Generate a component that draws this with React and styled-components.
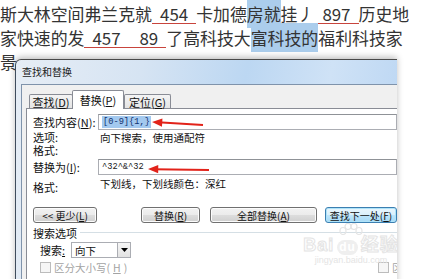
import styled, { createGlobalStyle } from "styled-components";

const GlobalStyle = createGlobalStyle`
  html, body {
    margin: 0;
    padding: 0;
    background: #ffffff;
  }
  body {
    width: 421px;
    height: 279px;
    overflow: hidden;
  }
`;

const CJK = `"Noto Sans CJK SC", "Noto Sans", sans-serif`;

function Arrow({ x1, y1, x2, y2 }) {
  const ang = Math.atan2(y1 - y2, x1 - x2);
  const len = 11;
  const spread = 0.38;
  const ax = x2 + len * Math.cos(ang - spread);
  const ay = y2 + len * Math.sin(ang - spread);
  const bx = x2 + len * Math.cos(ang + spread);
  const by = y2 + len * Math.sin(ang + spread);
  return (
    <ArrowSvg width="140" height="20" viewBox="0 0 140 20">
      <line x1={x1} y1={y1} x2={x2 + 6} y2={y2 + 0.3} stroke="#e2231a" strokeWidth="2" />
      <polygon points={`${x2},${y2} ${ax},${ay} ${bx},${by}`} fill="#e2231a" />
    </ArrowSvg>
  );
}

export default function App() {
  return (
    <>
      <GlobalStyle />
      <Page>
        <Doc>
          <Line>
            斯大林空间弗兰克就<Blank>454</Blank>卡加德<Mark>房就</Mark>挂丿<Blank>897</Blank>历史地
          </Line>
          <Line>
            家快速的发<Blank>457&nbsp;&nbsp;&nbsp;&nbsp;&nbsp;89</Blank>了高科技大<Mark>富科技的</Mark>福利科技家
          </Line>
          <Line>景</Line>
        </Doc>

        <Dialog>
          <TitleBar>查找和替换</TitleBar>
          <Client>
            <Tabs>
              <Tab $w={44}>查找(<u>D</u>)</Tab>
              <Tab $w={52} $active>替换(<u>P</u>)</Tab>
              <Tab $w={47}>定位(<u>G</u>)</Tab>
            </Tabs>
            <Panel>
              <Row>
                <Label>查找内容(<u>N</u>):</Label>
                <Field>
                  <Selected>[0-9]&#123;1,&#125;</Selected>
                  <Arrow x1={104} y1={10} x2={53} y2={7} />
                </Field>
              </Row>
              <Row $h={13} $mt={1}>
                <Label>选项:</Label>
                <Value>向下搜索，使用通配符</Value>
              </Row>
              <Row $h={13}>
                <Label>格式:</Label>
              </Row>
              <Row $mt={2}>
                <Label>替换为(<u>I</u>):</Label>
                <Field>
                  ^32^&amp;^32
                  <Arrow x1={110} y1={10} x2={49} y2={9} />
                </Field>
              </Row>
              <Row $h={18} $mt={1}>
                <Label $end>格式:</Label>
                <Value $top>下划线，下划线颜色：深红</Value>
              </Row>
              <Buttons>
                <Button $w={64}>&lt;&lt; 更少(<u>L</u>)</Button>
                <Button $w={59} $ml={44}>替换(<u>R</u>)</Button>
                <Button $w={107} $ml={10}>全部替换(<u>A</u>)</Button>
                <Button $w={72} $ml={8} $default>查找下一处(<u>F</u>)</Button>
              </Buttons>
              <Group>
                <span>搜索选项</span>
                <Rule />
              </Group>
              <SearchRow>
                <span>搜索<u>:</u></span>
                <Select>
                  <span>向下</span>
                  <Drop>
                    <svg width="7" height="4" viewBox="0 0 7 4">
                      <polygon points="0,0 7,0 3.5,4" fill="#000" />
                    </svg>
                  </Drop>
                </Select>
              </SearchRow>
              <Checks>
                <Check>
                  <Box />
                  区分大小写(<u>H</u>)
                </Check>
                <Check>
                  <Box />
                  区分前缀(<u>X</u>)
                </Check>
              </Checks>
            </Panel>
          </Client>
          <Watermark>
            <Paw>
              <svg width="26" height="16" viewBox="0 0 26 16">
                <g fill="none" stroke="#e4e4e4" strokeWidth="1.2">
                  <ellipse cx="5" cy="8" rx="3" ry="3.5" />
                  <ellipse cx="10" cy="3.5" rx="3" ry="3" />
                  <ellipse cx="16" cy="3.5" rx="3" ry="3" />
                  <ellipse cx="21" cy="8" rx="3" ry="3.5" />
                </g>
              </svg>
            </Paw>
            <WmBig>
              Bai<WmDu>du</WmDu>经验
            </WmBig>
            <WmSmall>jingyan.baidu.com</WmSmall>
          </Watermark>
        </Dialog>
      </Page>
    </>
  );
}

const Page = styled.div`
  position: relative;
  width: 421px;
  height: 279px;
  overflow: hidden;
  background: #fff;
`;

const Doc = styled.div`
  padding-top: 2px;
  font-family: ${CJK};
  font-size: 16.9px;
  line-height: 24px;
  color: #333;
  white-space: nowrap;
`;

const Line = styled.div`
  height: 24px;
`;

const Blank = styled.span`
  display: inline-block;
  line-height: 18px;
  padding: 0 8px;
  border-bottom: 1px solid #c8443c;
  white-space: pre;
`;

const Mark = styled.span`
  background: #abcdec;
  padding: 2px 0;
`;

const Dialog = styled.div`
  position: absolute;
  left: 15px;
  top: 59px;
  width: 382px;
  height: 240px;
  overflow: hidden;
  box-sizing: border-box;
  border-left: 1px solid #3f4c5c;
  border-top: 1px solid #4a4a4a;
  border-top-left-radius: 6px;
  padding-left: 5px;
  background: linear-gradient(100deg, #e6edf5 0%, #d6e4f3 30%, #bcd7f2 55%, #cfe2f6 75%, #b6d3f2 100%);
  box-shadow: 0 -2px 6px rgba(0, 0, 0, 0.25);
`;

const TitleBar = styled.div`
  height: 24px;
  line-height: 24px;
  padding-left: 1px;
  font-family: ${CJK};
  font-size: 10px;
  color: #1a1a1a;
`;

const Client = styled.div`
  height: 100%;
  box-sizing: border-box;
  border-top: 1px solid #7f93ab;
  border-left: 1px solid #7f93ab;
  background: #f0f0f0;
  padding: 5px 0 0 4px;
  font-family: ${CJK};
  font-size: 10.5px;
  color: #111;
`;

const Tabs = styled.div`
  display: flex;
  align-items: flex-end;
  margin-left: 3px;
  position: relative;
  z-index: 1;
`;

const Tab = styled.div`
  width: ${(p) => p.$w}px;
  height: ${(p) => (p.$active ? 19 : 14)}px;
  margin-bottom: ${(p) => (p.$active ? -1 : 0)}px;
  margin-left: ${(p) => (p.$active ? -1 : 0)}px;
  box-sizing: border-box;
  border: 1px solid #898c95;
  border-bottom: none;
  border-radius: 2px 2px 0 0;
  background: ${(p) => (p.$active ? "#ffffff" : "linear-gradient(#f4f4f4, #e4e4e4)")};
  display: flex;
  align-items: center;
  justify-content: center;
  font-size: 11px;
  u {
    text-underline-offset: 1px;
  }
`;

const Panel = styled.div`
  height: 100%;
  box-sizing: border-box;
  border-top: 1px solid #898c95;
  border-left: 1px solid #898c95;
  background: #ffffff;
  padding: 5px 0 0 6px;
`;

const Row = styled.div`
  display: flex;
  height: ${(p) => p.$h || 16}px;
  margin-top: ${(p) => p.$mt || 0}px;
`;

const Label = styled.div`
  width: 65px;
  flex: none;
  font-size: 11px;
  line-height: 13px;
  align-self: ${(p) => (p.$end ? "flex-end" : "center")};
`;

const Value = styled.div`
  padding-left: 2px;
  line-height: 13px;
  align-self: ${(p) => (p.$top ? "flex-start" : "center")};
  margin-top: ${(p) => (p.$top ? 1 : 0)}px;
  white-space: nowrap;
`;

const Field = styled.div`
  position: relative;
  flex: 1;
  box-sizing: border-box;
  height: 16px;
  border: 1px solid #abadb3;
  border-top-color: #8f9297;
  padding-left: 3px;
  display: flex;
  align-items: center;
  font-family: "Liberation Mono", monospace;
  font-size: 8.7px;
  color: #1a1a1a;
  white-space: pre;
`;

const Selected = styled.span`
  background: #a3c9ef;
  color: #10306e;
  padding: 1px 1px;
`;

const ArrowSvg = styled.svg`
  position: absolute;
  left: 0;
  top: 0;
  overflow: visible;
`;

const Buttons = styled.div`
  display: flex;
  margin-top: 13px;
`;

const Button = styled.div`
  flex: none;
  width: ${(p) => p.$w}px;
  height: 16px;
  margin-left: ${(p) => p.$ml || 0}px;
  box-sizing: border-box;
  border: 1px solid ${(p) => (p.$default ? "#3c7fb1" : "#707070")};
  border-radius: 3px;
  background: ${(p) =>
    p.$default
      ? "linear-gradient(#eaf6fd, #d9f0fc 50%, #bee6fd 51%, #a7d9f5)"
      : "linear-gradient(#f2f2f2, #ebebeb 50%, #dddddd 51%, #cfcfcf)"};
  box-shadow: inset 0 0 0 1px ${(p) => (p.$default ? "#aee3f9" : "#fcfcfc")};
  display: flex;
  align-items: center;
  justify-content: center;
  font-size: 10px;
  white-space: nowrap;
`;

const Group = styled.div`
  display: flex;
  align-items: center;
  gap: 3px;
  height: 13px;
  margin-top: 3px;
  font-size: 11px;
`;

const Rule = styled.div`
  flex: 1;
  height: 1px;
  background: #d5dfe5;
`;

const SearchRow = styled.div`
  display: flex;
  align-items: center;
  gap: 6px;
  height: 16px;
  margin-top: 3px;
  padding-left: 7px;
  font-size: 11px;
`;

const Select = styled.div`
  width: 60px;
  height: 16px;
  box-sizing: border-box;
  border: 1px solid #abadb3;
  display: flex;
  align-items: center;
  justify-content: space-between;
  padding-left: 3px;
  font-size: 10.5px;
`;

const Drop = styled.div`
  width: 13px;
  height: 14px;
  box-sizing: border-box;
  border-left: 1px solid #abadb3;
  background: linear-gradient(#f6f6f6, #e2e2e2);
  display: flex;
  align-items: center;
  justify-content: center;
`;

const Checks = styled.div`
  display: grid;
  grid-template-columns: 338px auto;
  height: 14px;
  margin-top: 2px;
  padding-left: 7px;
`;

const Check = styled.div`
  display: flex;
  align-items: center;
  gap: 3px;
  color: #a3a3a3;
  font-size: 10.5px;
  white-space: nowrap;
`;

const Box = styled.span`
  width: 9px;
  height: 9px;
  border: 1px solid #bcbcbc;
  background: #f6f6f6;
`;

const Watermark = styled.div`
  position: absolute;
  left: 287px;
  top: 163px;
  width: 96px;
  display: flex;
  flex-direction: column;
  align-items: center;
  pointer-events: none;
  white-space: nowrap;
`;

const Paw = styled.div`
  height: 14px;
  margin-bottom: -2px;
`;

const WmBig = styled.div`
  font-family: "Liberation Sans", ${CJK};
  font-size: 18px;
  line-height: 20px;
  font-weight: bold;
  color: transparent;
  -webkit-text-stroke: 1px #e4e4e4;
  letter-spacing: 1px;
`;

const WmDu = styled.span`
  display: inline-block;
  margin: 0 3px;
  padding: 0 2px;
  line-height: 15px;
  border-radius: 8px;
  background: #efefef;
  -webkit-text-stroke: 0;
  color: #fff;
  font-size: 12px;
`;

const WmSmall = styled.div`
  font-family: "Liberation Sans", sans-serif;
  font-size: 9px;
  line-height: 11px;
  color: #e4e4e4;
`;
